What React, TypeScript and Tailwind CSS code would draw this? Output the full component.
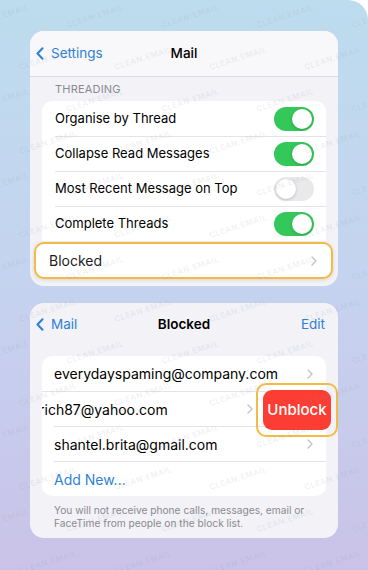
import React from "react";

const font = { fontFamily: "Inter, 'Noto Sans', sans-serif" };

function Toggle({ on }: { on: boolean }) {
  return (
    <div
      className={`w-[40px] h-[24px] rounded-full p-[2px] flex ${
        on ? "bg-[#34c759] justify-end" : "bg-[#e9e9eb] justify-start"
      }`}
    >
      <div className="w-[20px] h-[20px] rounded-full bg-white shadow-[0_1px_3px_rgba(0,0,0,0.2)]" />
    </div>
  );
}

function Chevron() {
  return (
    <svg width="6" height="10" viewBox="0 0 6 10" className="shrink-0">
      <path d="M1 1l4 4-4 4" fill="none" stroke="#c4c4c8" strokeWidth="1.4" strokeLinecap="round" strokeLinejoin="round" />
    </svg>
  );
}

function Back({ label }: { label: string }) {
  return (
    <div className="flex items-center gap-[7px] text-[#2f7fd6] text-[13.5px]">
      <svg width="8" height="13" viewBox="0 0 8 13">
        <path d="M6.5 1.2L1.5 6.5l5 5.3" fill="none" stroke="#2f7fd6" strokeWidth="2" strokeLinecap="round" strokeLinejoin="round" />
      </svg>
      <span>{label}</span>
    </div>
  );
}

function Watermarks() {
  const marks: { x: number; y: number }[] = [];
  for (let r = 0; r < 14; r++) {
    for (let c = 0; c < 5; c++) {
      marks.push({ x: c * 95 + (r % 2) * 48 - 30, y: r * 42 + 10 });
    }
  }
  return (
    <div className="absolute inset-0 overflow-hidden pointer-events-none">
      {marks.map((m, i) => (
        <span
          key={i}
          className="absolute text-[8px] font-semibold tracking-[0.5px] text-[#8f96a3]/15 -rotate-[18deg]"
          style={{ left: m.x, top: m.y }}
        >
          CLEAN.EMAIL
        </span>
      ))}
    </div>
  );
}

const threading = [
  { label: "Organise by Thread", on: true },
  { label: "Collapse Read Messages", on: true },
  { label: "Most Recent Message on Top", on: false },
  { label: "Complete Threads", on: true },
];

export default function App() {
  return (
    <div className="w-[368px] h-[570px] bg-white overflow-hidden" style={font}>
      <div className="relative h-full rounded-tr-[20px] bg-gradient-to-b from-[#bddcee] via-[#c5d3ef] to-[#cac3e7] pt-[31px] px-[30px] flex flex-col gap-[17px]">
        {/* Mail settings card */}
        <div className="h-[255px] rounded-[14px] bg-[#f2f2f7] flex flex-col">
          <div className="h-[46px] shrink-0 rounded-t-[14px] bg-[#f8f8fa] border-b border-[#dadade] relative flex items-center px-[6px]">
            <Back label="Settings" />
            <span className="absolute inset-x-0 text-center text-[13.5px] font-medium text-black">Mail</span>
          </div>
          <div className="pt-[6px] pb-[5px] pl-[25px] text-[11px] leading-[13px] text-[#8a8a8e] tracking-[0.2px]">THREADING</div>
          <div className="mx-[12px] bg-white rounded-t-[10px] flex flex-col">
            {threading.map((t, i) => (
              <div key={t.label} className="h-[35px] flex items-center pl-[13px]">
                <div
                  className={`h-full flex-1 flex items-center justify-between pr-[12px] ${
                    i > 0 ? "border-t border-[#e4e4e8]" : ""
                  }`}
                >
                  <span className="text-[13px] text-black">{t.label}</span>
                  <Toggle on={t.on} />
                </div>
              </div>
            ))}
          </div>
          <div className="mt-[1px] ml-[4px] mr-[5px] h-[37px] rounded-[10px] bg-white border-[2.5px] border-[#f2bb45] shadow-[0_1px_4px_rgba(0,0,0,0.12)] flex items-center justify-between pl-[13px] pr-[14px]">
            <span className="text-[14px] text-[#1c1c1e]">Blocked</span>
            <Chevron />
          </div>
        </div>

        {/* Blocked list card */}
        <div className="relative h-[235px] rounded-[14px] bg-[#f2f2f7] flex flex-col">
          <div className="h-[42px] shrink-0 relative flex items-center justify-between px-[6px] pt-[1px]">
            <Back label="Mail" />
            <span className="absolute inset-x-0 text-center text-[13.5px] font-semibold text-black">Blocked</span>
            <span className="text-[13.5px] text-[#2f7fd6] pr-[7px]">Edit</span>
          </div>
          <div className="mt-[11px] mx-[12px] bg-white rounded-[10px] flex flex-col overflow-hidden">
            <div className="h-[35px] flex items-center justify-between pl-[12px] pr-[13px]">
              <span className="text-[14px] text-black">everydayspaming@company.com</span>
              <Chevron />
            </div>
            <div className="h-[35px] flex items-center justify-between border-t border-[#e4e4e8] pr-[73px] overflow-hidden">
              <span className="text-[14px] text-black -ml-[3px]">rich87@yahoo.com</span>
              <Chevron />
            </div>
            <div className="h-[35px] flex items-center pl-[12px]">
              <div className="h-full flex-1 flex items-center justify-between border-t border-[#e4e4e8] pr-[13px]">
                <span className="text-[14px] text-black">shantel.brita@gmail.com</span>
                <Chevron />
              </div>
            </div>
            <div className="h-[35px] flex items-center pl-[12px]">
              <div className="h-full flex-1 flex items-center border-t border-[#e4e4e8]">
                <span className="text-[14px] text-[#2f7fd6]">Add New...</span>
              </div>
            </div>
          </div>
          <p className="mt-[8px] pl-[24px] pr-[20px] text-[10.2px] leading-[12.5px] text-[#8a8a8e]">
            You will not receive phone calls, messages, email or FaceTime from people on the block list.
          </p>

          {/* Unblock highlight */}
          <div className="absolute left-[226px] right-0 top-[80px] h-[54px] rounded-[10px] border-[2.5px] border-[#f2bb45] p-[5px] flex">
            <div className="flex-1 rounded-[9px] bg-[#fb3d33] flex items-center justify-center text-white text-[15px] font-medium">
              Unblock
            </div>
          </div>
        </div>

        <Watermarks />
      </div>
    </div>
  );
}
